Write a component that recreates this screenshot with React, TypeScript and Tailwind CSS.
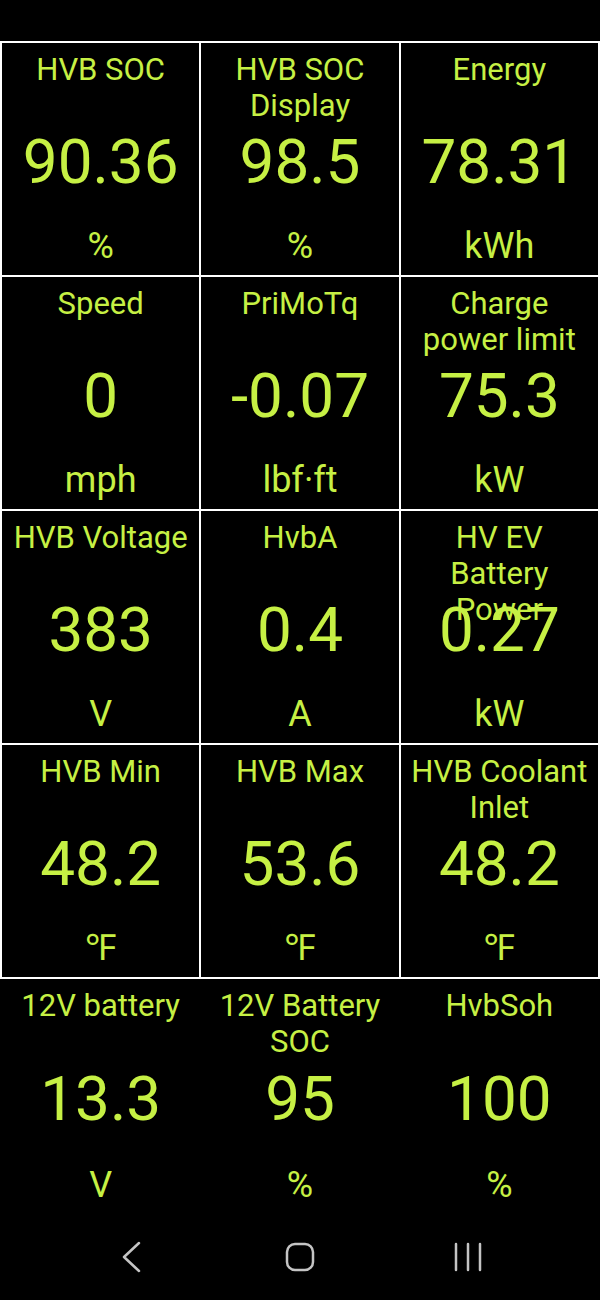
import React from 'react';

type Gauge = { title: string; value: string; unit: string };

const bordered: Gauge[] = [
  { title: 'HVB SOC', value: '90.36', unit: '%' },
  { title: 'HVB SOC Display', value: '98.5', unit: '%' },
  { title: 'Energy', value: '78.31', unit: 'kWh' },
  { title: 'Speed', value: '0', unit: 'mph' },
  { title: 'PriMoTq', value: '-0.07', unit: 'lbf·ft' },
  { title: 'Charge power limit', value: '75.3', unit: 'kW' },
  { title: 'HVB Voltage', value: '383', unit: 'V' },
  { title: 'HvbA', value: '0.4', unit: 'A' },
  { title: 'HV EV Battery Power', value: '0.27', unit: 'kW' },
  { title: 'HVB Min', value: '48.2', unit: '℉' },
  { title: 'HVB Max', value: '53.6', unit: '℉' },
  { title: 'HVB Coolant Inlet', value: '48.2', unit: '℉' },
];

const lastRow: Gauge[] = [
  { title: '12V battery', value: '13.3', unit: 'V' },
  { title: '12V Battery SOC', value: '95', unit: '%' },
  { title: 'HvbSoh', value: '100', unit: '%' },
];

const Cell = ({ g, tall }: { g: Gauge; tall?: boolean }) => (
  <div className={`grid bg-black text-center text-[#c6f044] ${tall ? 'h-[235px]' : 'h-[232px]'}`}>
    <div className="col-start-1 row-start-1 self-start px-2 pt-[9px] text-[31px] leading-[36px]">
      {g.title}
    </div>
    <div className="col-start-1 row-start-1 self-center pt-1 text-[62px] leading-normal">
      {g.value}
    </div>
    <div className="col-start-1 row-start-1 self-end pb-[9px] text-[36px] leading-[40px]">
      {g.unit}
    </div>
  </div>
);

export default function App() {
  return (
    <div
      className="w-[600px] h-[1300px] bg-black flex flex-col"
      style={{ fontFamily: 'Roboto, "Noto Sans", sans-serif' }}
    >
      <div className="h-[41px]" />
      <div className="grid grid-cols-3 gap-[2px] bg-white p-[2px]">
        {bordered.map((g, i) => (
          <Cell key={i} g={g} />
        ))}
      </div>
      <div className="grid grid-cols-3 gap-[2px] px-[2px]">
        {lastRow.map((g, i) => (
          <Cell key={i} g={g} tall />
        ))}
      </div>
      <div className="flex-1 flex items-center justify-center gap-[128px]">
        <div className="w-10 h-10 flex items-center justify-center">
          <svg width="20" height="32" viewBox="0 0 20 32" fill="none" stroke="#c4c4c4" strokeWidth="2.5" strokeLinecap="round" strokeLinejoin="round">
            <polyline points="17,2 2,16 17,30" />
          </svg>
        </div>
        <div className="w-10 h-10 flex items-center justify-center">
          <svg width="30" height="30" viewBox="0 0 30 30" fill="none" stroke="#c4c4c4" strokeWidth="2.5">
            <rect x="2" y="2" width="26" height="26" rx="8" />
          </svg>
        </div>
        <div className="w-10 h-10 flex items-center justify-center">
          <svg width="30" height="30" viewBox="0 0 30 30" fill="none" stroke="#c4c4c4" strokeWidth="2.5" strokeLinecap="round">
            <line x1="3" y1="2" x2="3" y2="28" />
            <line x1="15" y1="2" x2="15" y2="28" />
            <line x1="27" y1="2" x2="27" y2="28" />
          </svg>
        </div>
      </div>
    </div>
  );
}
